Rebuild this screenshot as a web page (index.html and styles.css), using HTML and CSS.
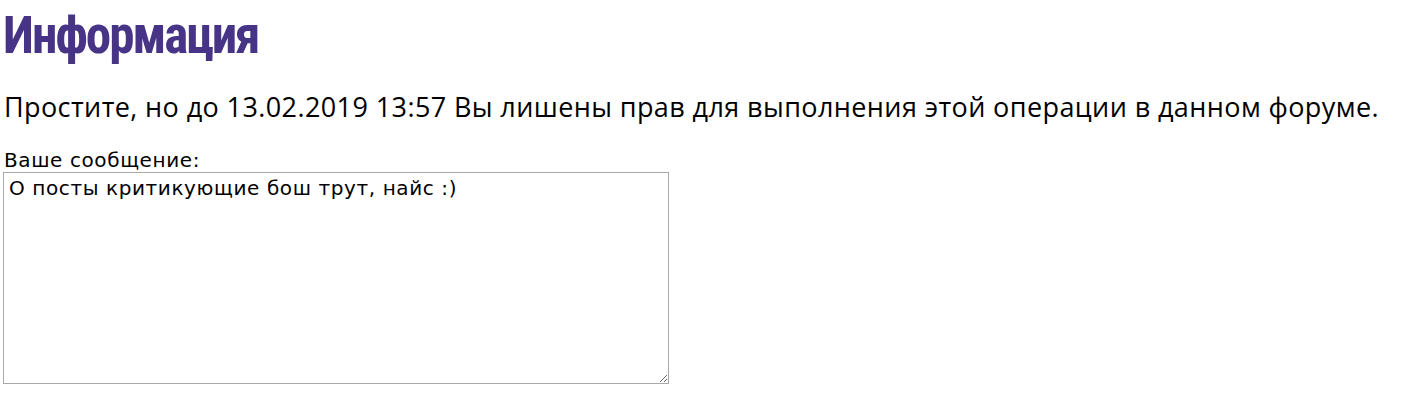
FILE: index.html
```html
<!DOCTYPE html>
<html>
<head>
  <title>Информация</title>
  <link rel="stylesheet" href="styles.css">
</head>
<body>

<h1 class="info-title">Информация</h1>

<p class="info-text">Простите, но до 13.02.2019 13:57 Вы лишены прав для выполнения этой операции в данном форуме.</p>

<div class="message-box">
  <label for="message">Ваше сообщение:</label>
  <textarea id="message">О посты критикующие бош трут, найс :)</textarea>
</div>

</body>
</html>
```

FILE: styles.css
```css
body {
  margin: 3px;
  background: #fff;
  color: #000;
  font-family: "DejaVu Sans", sans-serif;
}

.info-title {
  font-family: Roboto, "Liberation Sans", sans-serif;
  font-weight: bold;
  font-stretch: 75%;
  font-size: 51px;
  letter-spacing: -2px;
  color: #483486;
  margin: 5px 0 0 0;
  line-height: 56px;
}

.info-text {
  font-family: "Open Sans", "Noto Sans", sans-serif;
  font-size: 27px;
  letter-spacing: 0.4px;
  margin: 25px 0 0 1px;
  line-height: 36px;
}

.message-box {
  margin-top: 25px;
}

label {
  display: block;
  font-size: 20px;
  letter-spacing: 0.6px;
  line-height: 20px;
  margin-left: 1px;
}

textarea {
  display: block;
  width: 666px;
  height: 212px;
  box-sizing: border-box;
  border: 1px solid #a9a9a9;
  font-family: "DejaVu Sans", sans-serif;
  font-size: 20px;
  letter-spacing: 0.6px;
  line-height: 22px;
  padding: 4px 5px;
  margin: 2px 0 0 0;
}
```
